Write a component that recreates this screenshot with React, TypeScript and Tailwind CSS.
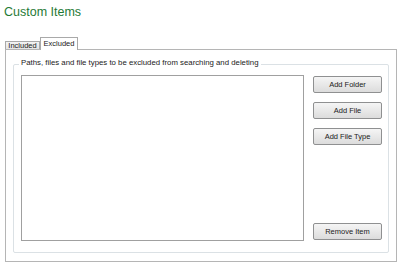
import React from 'react';

const buttons = ['Add Folder', 'Add File', 'Add File Type'];

const Button: React.FC<{ label: string }> = ({ label }) => (
  <button className="w-[69px] h-[17px] rounded-[2px] border border-[#8f9091] bg-gradient-to-b from-[#f5f5f5] to-[#dcdcdc] text-[7.5px] leading-none text-[#222]">
    {label}
  </button>
);

export default function App() {
  return (
    <div className="w-[400px] h-[263px] bg-white overflow-hidden font-['Liberation_Sans',Arial,sans-serif]">
      <h1 className="pl-[4px] pt-[4px] text-[12.5px] leading-[16px] text-[#1f7a36]">Custom Items</h1>

      {/* tab strip */}
      <div className="mt-[17px] ml-[5px] flex items-end h-[13px]">
        <div className="w-[35px] h-[9px] border border-b-0 border-[#a9a9a9] bg-gradient-to-b from-[#f3f3f3] to-[#e2e2e2] flex items-center justify-center text-[7.5px] text-[#222] leading-none">
          Included
        </div>
        <div className="relative z-10 w-[38px] h-[13px] border border-b-0 border-[#a9a9a9] bg-white flex items-start justify-center pt-[2px] text-[7.5px] text-[#222] leading-none">
          Excluded
        </div>
      </div>

      {/* tab page */}
      <div className="relative -mt-px ml-[5px] w-[392px] h-[213px] border border-[#b5b5b5] bg-white px-[7px] pt-[14px] pb-[8px]">
        <div className="relative h-full border border-[#dbe1e5] rounded-[2px] shadow-[inset_1px_1px_0_#fff] flex pl-[7px] pr-[6px] pt-[10px] pb-[11px]">
          <span className="absolute -top-[7px] left-[5px] bg-white px-[2px] text-[7.8px] leading-[9px] text-[#222]">
            Paths, files and file types to be excluded from searching and deleting
          </span>

          <div className="w-[283px] h-full border border-[#a0a0a0] bg-white" />

          <div className="ml-[9px] flex flex-col pt-[1px]">
            <div className="flex flex-col gap-[9px]">
              {buttons.map((b) => (
                <Button key={b} label={b} />
              ))}
            </div>
            <div className="mt-auto">
              <Button label="Remove Item" />
            </div>
          </div>
        </div>
      </div>
    </div>
  );
}
